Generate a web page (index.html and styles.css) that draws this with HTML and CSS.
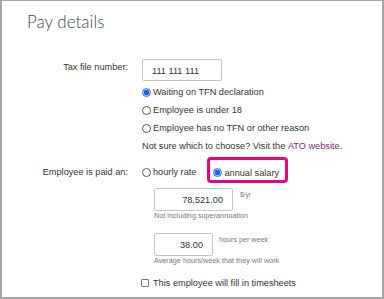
FILE: index.html
```html
<!DOCTYPE html>
<html>
<head>
<meta charset="utf-8">
<link rel="stylesheet" href="styles.css">
</head>
<body>
<div class="frame">
  <h1 class="title">Pay details</h1>
  <div class="form">
    <div class="label label-tfn">Tax file number:</div>
    <div class="field">
      <input class="text-input tfn-input" type="text" value="111 111 111" readonly>
      <div class="options">
        <label class="option"><input class="radio" type="radio" name="tfn" checked>Waiting on TFN declaration</label>
        <label class="option"><input class="radio" type="radio" name="tfn">Employee is under 18</label>
        <label class="option"><input class="radio" type="radio" name="tfn">Employee has no TFN or other reason</label>
        <div class="option">Not sure which to choose? Visit the&nbsp;<a class="link" href="#">ATO website</a>.</div>
      </div>
    </div>

    <div class="label label-paid">Employee is paid an:</div>
    <div class="field">
      <div class="pay-type">
        <label class="option hourly"><input class="radio" type="radio" name="paid">hourly rate</label>
        <label class="option highlight"><input class="radio" type="radio" name="paid" checked>annual salary</label>
      </div>
      <div class="amount-block salary">
        <div class="amount-row">
          <input class="text-input amount-input salary-input" type="text" value="78,521.00" readonly>
          <span class="unit">$/yr</span>
        </div>
        <div class="hint">Not including superannuation</div>
      </div>
      <div class="amount-block hours">
        <div class="amount-row">
          <input class="text-input amount-input hours-input" type="text" value="38.00" readonly>
          <span class="unit unit-hours">hours per week</span>
        </div>
        <div class="hint">Average hours/week that they will work</div>
      </div>
      <label class="check-row"><input class="checkbox" type="checkbox">This employee will fill in timesheets</label>
    </div>
  </div>
</div>
</body>
</html>
```
FILE: styles.css
```css
body {
  margin: 0;
  font-family: "Liberation Sans", Arial, sans-serif;
  color: #333;
}

.frame {
  width: 384px;
  height: 299px;
  box-sizing: border-box;
  border: 2px solid #a5a5a5;
  border-top-width: 1px;
  padding: 9px 0 0 25px;
  background: #fff;
}

.title {
  margin: 0 0 25px;
  font: 300 17px/24px Lato, "Open Sans", sans-serif;
  color: #3c4859;
}

.form {
  display: grid;
  grid-template-columns: 101px auto;
  column-gap: 14px;
  font-size: 9.2px;
  line-height: 12px;
}

.label {
  text-align: right;
  color: #333;
}

.label-tfn {
  padding-top: 2px;
}

.label-paid {
  padding-top: 11px;
}

.text-input {
  display: block;
  box-sizing: border-box;
  margin: 0;
  border: 1px solid #c6c6c6;
  border-radius: 2px;
  font-family: inherit;
  font-size: 9.2px;
  color: #333;
  background: #fff;
  outline: none;
}

.tfn-input {
  width: 80px;
  height: 22px;
  padding: 1px 0 0 9px;
}

.options {
  margin-top: 2px;
}

.option {
  display: flex;
  align-items: center;
  height: 18px;
  white-space: nowrap;
}

.radio {
  -webkit-appearance: none;
  appearance: none;
  box-sizing: border-box;
  width: 9px;
  height: 9px;
  margin: 0 2px 0 0;
  border: 1px solid #5a5a5a;
  border-radius: 50%;
  background: #fff;
  flex: none;
}

.radio:checked {
  border-color: #2f72d2;
  background: radial-gradient(circle, #1566e0 0 2.6px, #bcd3f3 3px);
}

.link {
  color: #7d2a7e;
  text-decoration: none;
}

.pay-type {
  display: flex;
  align-items: flex-start;
  margin-top: 2px;
}

.hourly {
  height: 12px;
  padding-top: 9px;
  margin-right: 11px;
}

.highlight {
  height: 12px;
  padding: 6.5px 6px 1.5px 3px;
  border: 3px solid #e5067d;
  border-radius: 4px;
}

.amount-block {
  margin-left: 12px;
}

.salary {
  margin-top: 5px;
}

.hours {
  margin-top: 13px;
}

.amount-row {
  display: flex;
  align-items: flex-start;
}

.amount-input {
  height: 23px;
  padding: 1px 9px 0 0;
  text-align: right;
}

.salary-input {
  width: 79px;
}

.hours-input {
  width: 59px;
}

.unit {
  margin-left: 7px;
  padding-top: 3px;
  font-size: 6.5px;
  line-height: 8px;
  color: #777;
}

.unit-hours {
  margin-left: 6px;
  font-size: 7.2px;
}

.hint {
  font-size: 7.25px;
  line-height: 9px;
  color: #777;
}

.check-row {
  display: flex;
  align-items: center;
  margin: 12px 0 0 -1px;
  height: 12px;
  white-space: nowrap;
}

.checkbox {
  -webkit-appearance: none;
  appearance: none;
  box-sizing: border-box;
  width: 8px;
  height: 8px;
  margin: 0 4px 0 0;
  border: 1px solid #777;
  border-radius: 1px;
  background: #fff;
  flex: none;
}
```
